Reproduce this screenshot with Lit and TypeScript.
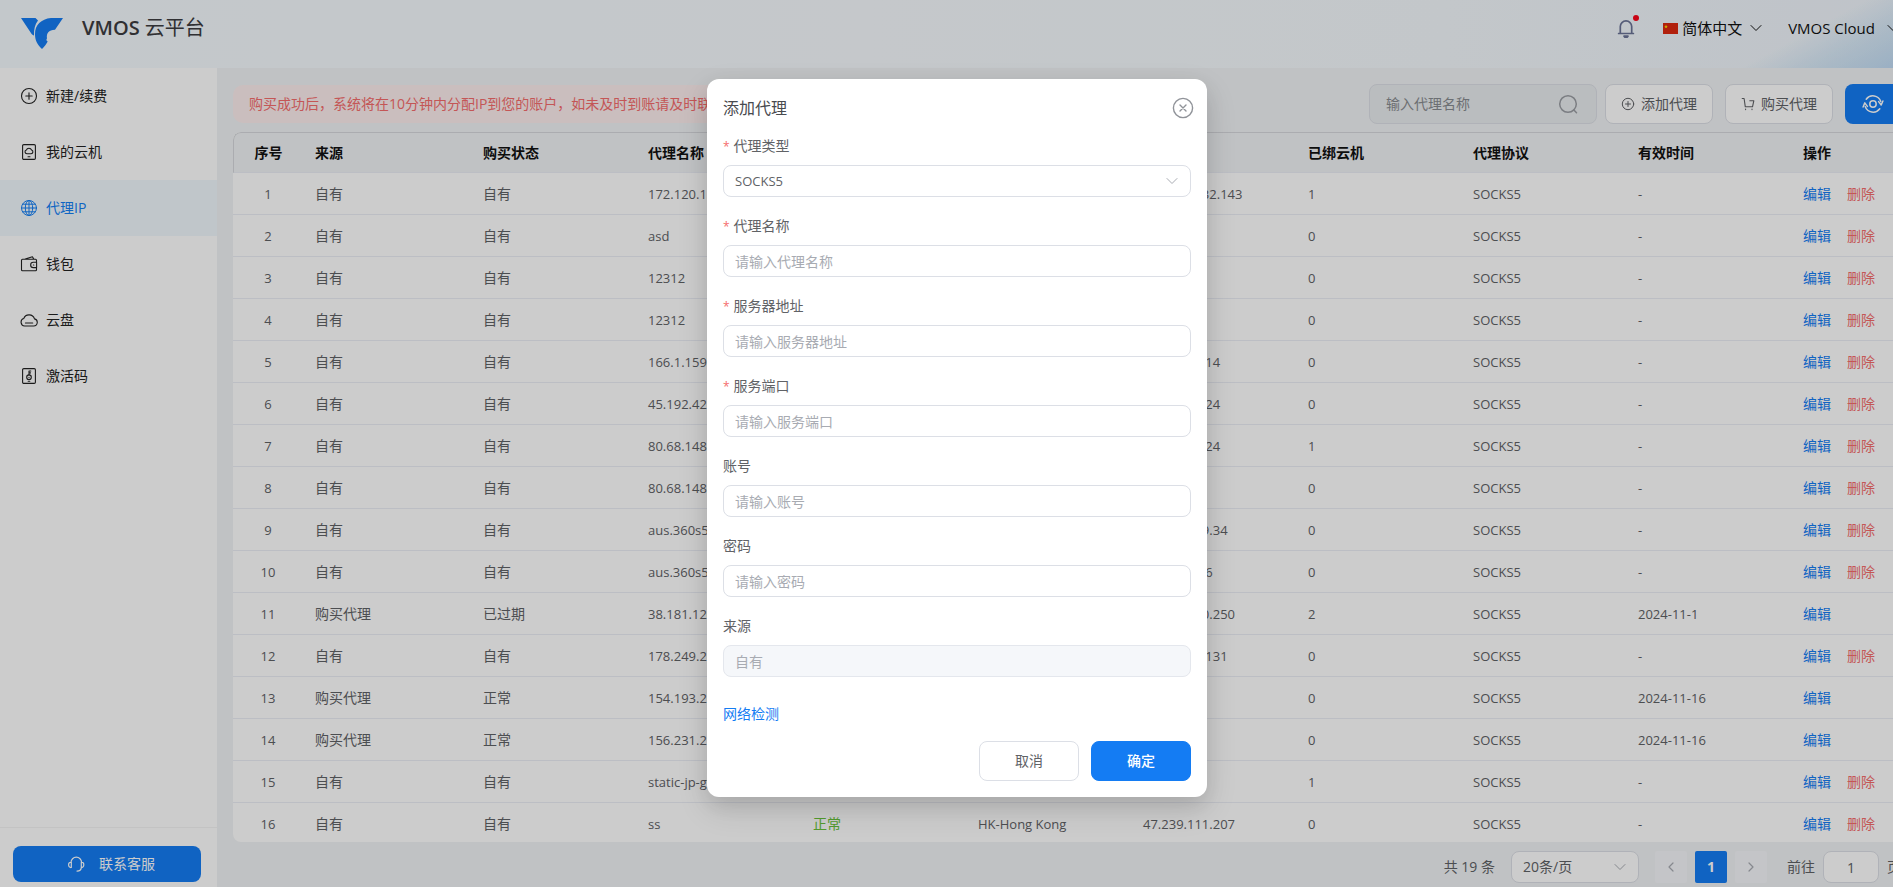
import { LitElement, html, css, svg, nothing } from "lit";
import { customElement, state } from "lit/decorators.js";
import { classMap } from "lit/directives/class-map.js";

interface Proxy {
  source: string;
  purchase: string;
  name: string;
  status: string;
  region: string;
  ip: string;
  bound: number;
  expires: string;
}

const own = (name: string, ip: string, bound = 0, region = ""): Proxy => ({
  source: "自有", purchase: "自有", name, status: "正常", region, ip, bound, expires: "-",
});
const bought = (purchase: string, name: string, ip: string, bound: number, expires: string): Proxy => ({
  source: "购买代理", purchase, name, status: "正常", region: "", ip, bound, expires,
});

const PROXIES: Proxy[] = [
  own("172.120.132.143", "172.120.132.143", 1),
  own("asd", ""),
  own("12312", ""),
  own("12312", ""),
  own("166.1.159.14", "166.1.159.14"),
  own("45.192.42.24", "45.192.42.24"),
  own("80.68.148.24", "80.68.148.24", 1),
  own("80.68.148.24", ""),
  own("aus.360s5.com", "43.159.229.34"),
  own("aus.360s5.com", "43.153.21.6"),
  bought("已过期", "38.181.120.250", "38.181.120.250", 2, "2024-11-1"),
  own("178.249.2.131", "178.249.2.131"),
  bought("正常", "154.193.2.1", "", 0, "2024-11-16"),
  bought("正常", "156.231.2.1", "", 0, "2024-11-16"),
  own("static-jp-gw", "", 1),
  own("ss", "47.239.111.207", 0, "HK-Hong Kong"),
];

const HEADINGS = ["序号", "来源", "购买状态", "代理名称", "状态", "地区", "IP地址", "已绑云机", "代理协议", "有效时间", "操作"];

const FIELDS = [
  { id: "name", label: "代理名称", hint: "请输入代理名称", required: true },
  { id: "host", label: "服务器地址", hint: "请输入服务器地址", required: true },
  { id: "port", label: "服务端口", hint: "请输入服务端口", required: true },
  { id: "account", label: "账号", hint: "请输入账号", required: false },
  { id: "password", label: "密码", hint: "请输入密码", required: false },
];

const icon = (size: number, body: unknown, weight = 1) => html`<svg
  width=${size} height=${size} viewBox="0 0 ${size} ${size}" fill="none"
  stroke="currentColor" stroke-width=${weight} stroke-linecap="round" stroke-linejoin="round"
  aria-hidden="true">${body}</svg>`;

const ICONS = {
  create: icon(18, svg`<circle cx="9" cy="9" r="7.5"/><path d="M9 5.8v6.4M5.8 9h6.4"/>`, 1.1),
  phone: icon(18, svg`<rect x="2.6" y="1.6" width="12.8" height="14.8" rx="1.2"/><path d="M6.9 10.8h4.2a1.9 1.9 0 0 0 .5-3.7 2.8 2.8 0 0 0-5.3 0 1.9 1.9 0 0 0 .6 3.7zM8 13.7h2"/>`, 1.1),
  globe: icon(18, svg`<circle cx="9" cy="9" r="7.5"/><ellipse cx="9" cy="9" rx="3.7" ry="7.5"/><path d="M9 1.5v15M1.5 9h15M2.7 5.2h12.6M2.7 12.8h12.6"/>`, 1),
  wallet: icon(18, svg`<path d="M16.5 7V5.2a1 1 0 0 0-1-1h-13a1 1 0 0 0-1 1v9.6a1 1 0 0 0 1 1h13a1 1 0 0 0 1-1v-1.6M5.2 4.1l7.2-2.4 1.4 2.4"/><path d="M16.6 7.3h-3.3a2.4 2.4 0 0 0 0 5.3h3.3z"/><path d="M13.4 10h.4"/>`, 1.1),
  cloud: icon(18, svg`<path d="M4.6 15h9.1a3.6 3.6 0 0 0 .8-7.1A5.7 5.7 0 0 0 3.7 7.6 3.8 3.8 0 0 0 4.6 15z"/><path d="M5.4 12h7.3"/>`, 1.1),
  code: icon(18, svg`<rect x="2.6" y="1.6" width="12.8" height="14.8" rx="1.2"/><circle cx="9" cy="10.2" r="2.3"/><path d="M9 7.9V4h1.8M9 5.9h1.5M9 10.2v.2M8.2 14.2h1.6"/>`, 1.1),
  headset: icon(18, svg`<path d="M4 7.5a5.3 5.3 0 0 1 10.6 0M4.3 7.3C2.7 7 1.6 8 1.6 9.8s1.1 3 2.7 2.7zM14.3 7.3c1.6-.3 2.5.7 2.5 2.5s-1.1 3-2.5 2.7zM14.3 12.6c-.2 2.3-1.7 3.4-4.3 3.5"/>`, 1.2),
  bell: icon(20, svg`<path d="M2.6 15.5h14.8M4.3 15.3V8.600a5.700 5.700 0 0 1 11.400 0v6.700"/><path d="M8 18.200h4l-.8.900H8.800z"/>`, 1.7),
  caret: icon(12, svg`<path d="M1 3.5l5 5 5-5"/>`, 1),
  left: icon(12, svg`<path d="M8 2L4 6l4 4"/>`, 1.2),
  right: icon(12, svg`<path d="M4 2l4 4-4 4"/>`, 1.2),
  search: icon(20, svg`<circle cx="10" cy="10" r="8.3"/><path d="M15.900 16l2.600 2.700"/>`, 1.5),
  add: icon(14, svg`<circle cx="7" cy="7" r="5.7"/><path d="M7 4.5v5M4.500 7h5"/>`, 1),
  cart: icon(14, svg`<path d="M1.200 1.500h1.900l1.200 8.300h7.200l1.300-6H8.800M4.600 12v.6M11 12v.6"/>`, 1.1),
  refresh: icon(22, svg`<circle cx="11" cy="11" r="3.2"/><path d="M4.200 6.200a8.400 8.400 0 0 1 14.600 2.200M17.800 15.800A8.400 8.400 0 0 1 3.200 13.600"/><path d="M16.600 8.600l2.600 3.400 1.700-4M5.400 13.400L2.800 9.900 1.100 14"/>`, 1.5),
  close: icon(22, svg`<circle cx="11" cy="11" r="9.600"/><path d="M8 8l6 6M14 8l-6 6"/>`, 1.4),
};

const MENU = [
  { text: "新建/续费", icon: ICONS.create },
  { text: "我的云机", icon: ICONS.phone },
  { text: "代理IP", icon: ICONS.globe, active: true },
  { text: "钱包", icon: ICONS.wallet },
  { text: "云盘", icon: ICONS.cloud },
  { text: "激活码", icon: ICONS.code },
];

@customElement("app-root")
export class AppRoot extends LitElement {
  @state() private dialogOpen = true;

  static styles = css`
    :host {
      display: block;
      height: 100vh;
      overflow: hidden;
      font: 14px/20px "Open Sans", "Noto Sans CJK SC", sans-serif;
      color: #606266;
    }
    *, *::before, *::after { box-sizing: border-box; }
    button, input, select { font: inherit; color: inherit; margin: 0; }
    button { cursor: pointer; }
    a { color: inherit; text-decoration: none; }
    svg { display: block; flex: none; }
    ::placeholder { color: #a8abb2; opacity: 1; }

    .app {
      position: relative;
      display: flex;
      flex-direction: column;
      min-width: 1925px;
      height: 100%;
    }
    .header {
      flex: none;
      display: flex;
      align-items: center;
      height: 68px;
      padding: 0 24px 12px 21px;
      background:
        linear-gradient(152deg, transparent 66%, rgba(150, 200, 235, 0.25) 78%, rgba(130, 185, 235, 0.5)) right / 420px 100% no-repeat,
        linear-gradient(90deg, #f4fafe, #f7fbfe 45%, #f4f9fd 75%, #eff5fc);
      color: #111;
    }
    .logo { margin-top: 10px; }
    .brand {
      margin: 0 auto 0 19px;
      font-size: 20px;
      line-height: 28px;
      font-weight: 400;
      color: #3c3c40;
    }
    .brand b { font-weight: 600; }
    .bell {
      position: relative;
      margin-right: 27px;
      padding: 0;
      border: 0;
      background: none;
      color: #6b7396;
    }
    .dot {
      position: absolute;
      top: -3px;
      right: -3px;
      width: 6px;
      height: 6px;
      border-radius: 50%;
      background: #fb0519;
    }
    .pick {
      display: flex;
      align-items: center;
      gap: 8px;
      padding: 0;
      border: 0;
      background: none;
      font-size: 15px;
    }
    .lang { gap: 4px; margin-right: 26px; }
    .lang span { margin-right: 4px; }
    .user { gap: 12px; margin-right: 2px; }

    .body { flex: 1; display: flex; min-height: 0; }
    .side {
      flex: none;
      display: flex;
      flex-direction: column;
      width: 217px;
      background: #fff;
    }
    .menu { flex: 1; margin: 0; padding: 0; list-style: none; }
    .item {
      display: flex;
      align-items: center;
      gap: 8px;
      height: 56px;
      padding-left: 20px;
      color: #222;
    }
    .item.active { color: #147ff4; background: #f1f8fd; }
    .support { padding: 18px 16px 5px 13px; border-top: 1px solid #f4f4f4; }
    .contact {
      display: flex;
      align-items: center;
      justify-content: center;
      gap: 14px;
      width: 188px;
      height: 36px;
      padding: 0 0 0 8px;
      border: 0;
      border-radius: 8px;
      background: #147cf3;
      color: #fff;
    }

    .main {
      flex: 1;
      display: flex;
      flex-direction: column;
      min-width: 0;
      padding: 16px 24px 4px 16px;
      background: #f1f3f5;
    }
    .bar { display: flex; align-items: center; margin-bottom: 8px; }
    .notice {
      margin: 0 auto 0 0;
      padding: 9px 16px;
      border-radius: 10px;
      background: #fdeeee;
      color: #f56c6c;
    }
    .search {
      display: flex;
      align-items: center;
      width: 228px;
      height: 40px;
      margin-right: 8px;
      padding: 0 18px 0 16px;
      border: 1px solid #dcdfe6;
      border-radius: 8px;
      background: #e9edef;
      color: #9a9da3;
    }
    .search input {
      flex: 1;
      min-width: 0;
      padding: 0;
      border: 0;
      outline: 0;
      background: none;
    }
    .search ::placeholder { color: #888b90; }
    .tool {
      display: flex;
      align-items: center;
      justify-content: center;
      gap: 6px;
      width: 108px;
      height: 40px;
      margin-right: 12px;
      padding: 0;
      border: 1px solid #dcdfe6;
      border-radius: 8px;
      background: #fff;
    }
    .tool.refresh {
      width: 56px;
      margin-right: 0;
      border: 0;
      background: #147cf3;
      color: #fff;
    }

    .table-box {
      flex: 1;
      min-height: 0;
      overflow: hidden;
      border-radius: 8px;
      background: #fff;
    }
    .table {
      width: 100%;
      border-collapse: separate;
      border-spacing: 0;
      table-layout: fixed;
    }
    .table th {
      height: 41px;
      padding: 0 12px;
      border-top: 1px solid #d6d8dc;
      border-bottom: 1px solid #ebeef5;
      background: #f1f3f5;
      color: #111;
      font-weight: 700;
      text-align: left;
    }
    .table th:first-child { border-left: 1px solid #d6d8dc; border-top-left-radius: 8px; }
    .table td {
      height: 42px;
      padding: 0 12px;
      border-bottom: 1px solid #ebeef5;
      white-space: nowrap;
    }
    .table th:first-child, .table td:first-child { text-align: center; }
    .latin { font-size: 13px; }
    .ok { color: #67c23a; }
    .link { color: #147cf3; }
    .link + .link { margin-left: 16px; color: #f56c6c; }
    .c-index { width: 70px; }
    .c-source { width: 168px; }
    .c-wide { width: 165px; }

    .pager {
      flex: none;
      display: flex;
      align-items: center;
      justify-content: flex-end;
      margin-top: 9px;
    }
    .drop { display: grid; align-items: center; }
    .drop > * { grid-area: 1 / 1; }
    .drop svg { justify-self: end; margin-right: 13px; color: #a8abb2; pointer-events: none; }
    .control {
      width: 100%;
      height: 32px;
      padding: 0 11px;
      border: 1px solid #dcdfe6;
      border-radius: 8px;
      outline: 0;
      background: #fff;
      appearance: none;
    }
    .control:disabled { background: #f5f7fa; border-color: #e4e7ed; color: #a8abb2; opacity: 1; }
    .pager .drop { width: 128px; margin: 0 16px; }
    .page {
      display: grid;
      place-items: center;
      width: 32px;
      height: 32px;
      margin-right: 8px;
      padding: 0;
      border: 0;
      border-radius: 2px;
      background: #f5f7fa;
      color: #a8abb2;
    }
    .page.current { background: #147cf3; color: #fff; font-weight: 700; }
    .jump { display: flex; align-items: center; gap: 8px; margin-left: 12px; }
    .jump .control { width: 56px; text-align: center; }

    .overlay {
      position: absolute;
      inset: 0;
      display: flex;
      justify-content: center;
      align-items: flex-start;
      padding: 79px 11px 0 0;
      background: rgba(0, 0, 0, 0.2);
    }
    .dialog {
      width: 500px;
      padding: 16px;
      border-radius: 12px;
      background: #fff;
      box-shadow: 0 12px 32px rgba(0, 0, 0, 0.12), 0 8px 20px rgba(0, 0, 0, 0.08);
    }
    .top { display: flex; align-items: center; justify-content: space-between; height: 26px; margin-bottom: 14px; }
    .title { margin: 0; font-size: 16px; line-height: 24px; font-weight: 400; color: #484a4e; }
    .close { margin-right: -3px; padding: 0; border: 0; background: none; color: #909399; }
    .field { margin-bottom: 18px; }
    .label { display: block; margin-bottom: 8px; line-height: 22px; }
    .req { margin-right: 4px; font-size: 12px; line-height: 20px; color: #f56c6c; }
    .check { display: inline-block; margin: 8px 0 16px; line-height: 22px; color: #147cf3; }
    .actions { display: flex; justify-content: flex-end; gap: 12px; }
    .btn {
      width: 100px;
      height: 40px;
      padding: 0;
      border: 1px solid #dcdfe6;
      border-radius: 8px;
      background: #fff;
    }
    .btn.primary { border-color: #147cf3; background: #147cf3; color: #fff; font-weight: 500; }
  `;

  render() {
    return html`<div class="app">
      ${this.header()}
      <div class="body">${this.sidebar()}${this.content()}</div>
      ${this.dialogOpen ? this.dialog() : nothing}
    </div>`;
  }

  private header() {
    return html`<header class="header">
      <svg class="logo" width="42" height="31" viewBox="0 0 42 31" fill="#147cf3" aria-hidden="true">
        <path d="M0 0h14.500l2.500 2.500C14 6.500 12.800 11 13 17.500c-1 0-2-.8-2.700-1.900z" />
        <path d="M42 0H30C20 1 14 7 14 16c0 6 2 10.500 7 15 2.300-2.200 4.200-4.600 5.700-7.500-1.700-1-1.400-2.300-.7-3-.7-5 1.500-8.800 8-8.800z" />
      </svg>
      <h1 class="brand"><b>VMOS</b> 云平台</h1>
      <button class="bell" aria-label="消息">${ICONS.bell}<i class="dot"></i></button>
      <button class="pick lang">
        <svg width="15" height="11" viewBox="0 0 15 11" aria-hidden="true">
          <path fill="#de2910" d="M0 0h15v11H0z" />
          <path fill="#ffde00" d="M3 1.500l.5 1.400h1.400l-1.100.9.4 1.400L3 4.400l-1.200.8.4-1.400-1.100-.9h1.400z" />
        </svg>
        <span>简体中文</span>${ICONS.caret}
      </button>
      <button class="pick user">VMOS Cloud ${ICONS.caret}</button>
    </header>`;
  }

  private sidebar() {
    return html`<nav class="side">
      <ul class="menu">
        ${MENU.map((m) => html`<li>
          <a href="#" class=${classMap({ item: true, active: !!m.active })}>${m.icon}${m.text}</a>
        </li>`)}
      </ul>
      <div class="support"><button class="contact">${ICONS.headset}联系客服</button></div>
    </nav>`;
  }

  private content() {
    return html`<main class="main">
      <div class="bar">
        <p class="notice">购买成功后，系统将在10分钟内分配IP到您的账户，如未及时到账请及时联系客服</p>
        <label class="search"><input type="text" aria-label="代理名称" placeholder="输入代理名称" />${ICONS.search}</label>
        <button class="tool" @click=${() => (this.dialogOpen = true)}>${ICONS.add}添加代理</button>
        <button class="tool">${ICONS.cart}购买代理</button>
        <button class="tool refresh" aria-label="刷新">${ICONS.refresh}</button>
      </div>
      <div class="table-box">
        <table class="table">
          <colgroup>
            <col class="c-index" /><col class="c-source" />
            ${HEADINGS.slice(2, -1).map(() => html`<col class="c-wide" />`)}
            <col />
          </colgroup>
          <thead><tr>${HEADINGS.map((h) => html`<th scope="col">${h}</th>`)}</tr></thead>
          <tbody>${PROXIES.map((p, i) => this.row(p, i))}</tbody>
        </table>
      </div>
      <div class="pager">
        <span>共 19 条</span>
        <div class="drop">
          <select class="control" aria-label="每页条数"><option>20条/页</option></select>${ICONS.caret}
        </div>
        <button class="page" disabled aria-label="上一页">${ICONS.left}</button>
        <button class="page current">1</button>
        <button class="page" disabled aria-label="下一页">${ICONS.right}</button>
        <label class="jump">前往<input class="control" type="text" .value=${"1"} />页</label>
      </div>
    </main>`;
  }

  private row(p: Proxy, i: number) {
    return html`<tr>
      <td class="latin">${i + 1}</td>
      <td>${p.source}</td>
      <td>${p.purchase}</td>
      <td class="latin">${p.name}</td>
      <td class="ok">${p.status}</td>
      <td class="latin">${p.region}</td>
      <td class="latin">${p.ip}</td>
      <td class="latin">${p.bound}</td>
      <td class="latin">SOCKS5</td>
      <td class="latin">${p.expires}</td>
      <td><a class="link" href="#">编辑</a>${p.source === "自有" ? html`<a class="link" href="#">删除</a>` : nothing}</td>
    </tr>`;
  }

  private dialog() {
    const hide = () => (this.dialogOpen = false);
    return html`<div class="overlay">
      <section class="dialog" role="dialog" aria-modal="true" aria-labelledby="title">
        <div class="top">
          <h2 class="title" id="title">添加代理</h2>
          <button class="close" aria-label="关闭" @click=${hide}>${ICONS.close}</button>
        </div>
        <div class="field">
          <label class="label" for="type"><span class="req">*</span>代理类型</label>
          <div class="drop"><select class="control latin" id="type"><option>SOCKS5</option></select>${ICONS.caret}</div>
        </div>
        ${FIELDS.map((f) => html`<div class="field">
          <label class="label" for=${f.id}>${f.required ? html`<span class="req">*</span>` : nothing}${f.label}</label>
          <input class="control" id=${f.id} type=${f.id === "password" ? "password" : "text"} placeholder=${f.hint} />
        </div>`)}
        <div class="field">
          <label class="label" for="source">来源</label>
          <input class="control" id="source" type="text" .value=${"自有"} disabled />
        </div>
        <a class="check" href="#">网络检测</a>
        <div class="actions">
          <button class="btn" @click=${hide}>取消</button>
          <button class="btn primary">确定</button>
        </div>
      </section>
    </div>`;
  }
}
